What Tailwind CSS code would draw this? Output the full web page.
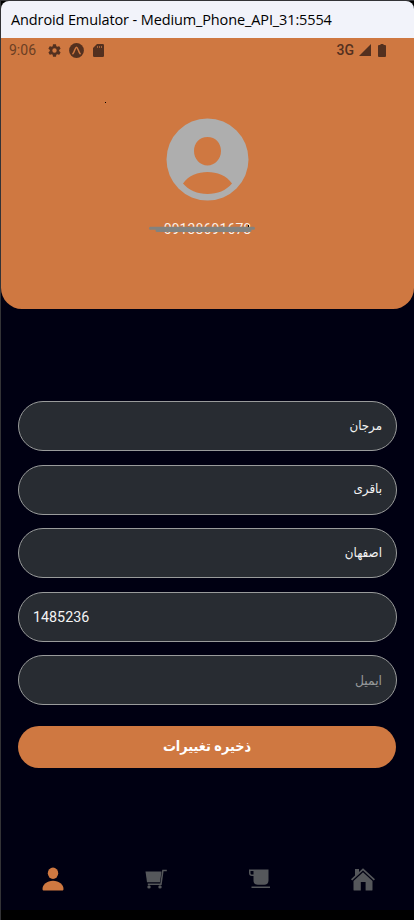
<!DOCTYPE html>
<html lang="fa">
<head>
<meta charset="utf-8">
<meta name="viewport" content="width=device-width, initial-scale=1">
<title>Profile</title>
<script src="https://cdn.jsdelivr.net/npm/@tailwindcss/browser@4"></script>
</head>
<body class="bg-black overflow-hidden">
<div class="w-[414px] h-[920px] flex flex-col border-l border-t border-[#333336] bg-black overflow-hidden font-['Roboto','DejaVu_Sans_Condensed','DejaVu_Sans',sans-serif]">
  <div class="h-[37px] shrink-0 bg-[#f2f3fa] rounded-t-[8px] flex items-center pl-[10px]">
    <span class="font-['Open_Sans',sans-serif] text-[14.5px] leading-5 tracking-[-0.12px] text-black whitespace-nowrap">Android Emulator - Medium_Phone_API_31:5554</span>
  </div>
  <main class="h-[872px] shrink-0 bg-[#000012] flex flex-col">
    <header class="h-[271px] shrink-0 bg-[#cf7841] rounded-b-[21px] flex flex-col">
      <div class="h-6 flex items-center pl-2 pr-[28px] text-[#53301f]">
        <span class="text-[14px] leading-6 w-[38px] text-[#6b3f24]">9:06</span>
        <svg class="w-[15px] h-[15px] shrink-0" viewBox="0 0 24 24" fill="currentColor"><path d="M19.43 12.98c.04-.32.07-.64.07-.98s-.03-.66-.07-.98l2.11-1.65c.19-.15.24-.42.12-.64l-2-3.46c-.12-.22-.39-.3-.61-.22l-2.49 1c-.52-.4-1.08-.73-1.69-.98l-.38-2.65A.49.49 0 0 0 14 2h-4c-.25 0-.46.18-.49.42l-.38 2.65c-.61.25-1.17.59-1.69.98l-2.49-1c-.23-.09-.49 0-.61.22l-2 3.46c-.13.22-.07.49.12.64l2.11 1.65c-.04.32-.07.65-.07.98s.03.66.07.98l-2.11 1.65c-.19.15-.24.42-.12.64l2 3.46c.12.22.39.3.61.22l2.49-1c.52.4 1.08.73 1.69.98l.38 2.65c.03.24.24.42.49.42h4c.25 0 .46-.18.49-.42l.38-2.65c.61-.25 1.17-.59 1.69-.98l2.49 1c.23.09.49 0 .61-.22l2-3.46c.12-.22.07-.49-.12-.64zM12 15.500a3.500 3.500 0 1 1 0-7 3.500 3.500 0 0 1 0 7z"/></svg>
        <svg class="w-[15px] h-[15px] shrink-0 ml-[7px]" viewBox="0 0 15 15"><circle cx="7.500" cy="7.500" r="7.400" fill="#53301f"/><path d="M3.900 10.700C5.400 9.500 6.100 4.200 7.500 4.200S9.600 9.500 11.100 10.700" fill="none" stroke="#cf7841" stroke-width="1.500" stroke-linecap="round"/></svg>
        <svg class="w-[11px] h-[13px] shrink-0 ml-[9px]" viewBox="0 0 11 13"><path d="M4 0h5.700A1.300 1.300 0 0 1 11 1.300v10.400A1.300 1.300 0 0 1 9.700 13H1.300A1.300 1.300 0 0 1 0 11.700V4z" fill="#53301f"/><path d="M4.500 2v2M6.500 2v2M8.500 2v2" stroke="#b0663a" stroke-width=".9"/></svg>
        <span class="ml-auto text-[14px] leading-6 font-medium">3G</span>
        <svg class="w-3 h-3 ml-[5px]" viewBox="0 0 12 12"><path d="M12 0v12H0z" fill="currentColor"/></svg>
        <svg class="w-2 h-[13px] ml-[7px]" viewBox="0 0 8 13"><path d="M2.500 0h3v1H7a1 1 0 0 1 1 1v10a1 1 0 0 1-1 1H1a1 1 0 0 1-1-1V2a1 1 0 0 1 1-1h1.500z" fill="currentColor"/></svg>
      </div>
      <div class="relative flex flex-col items-center pt-[56px]">
        <i class="absolute left-[104px] top-[40px] w-px h-px bg-black"></i>
        <svg class="w-[83px] h-[83px]" viewBox="0 0 83 83"><path fill="#aeaeae" fill-rule="evenodd" d="M41.500.5a41 41 0 1 1 0 82 41 41 0 0 1 0-82zm0 18.500C33.500 19 28 25 28 33S34 47.500 41.500 47.500 55 41 55 33 49.500 19 41.500 19zM17 65.500c5.500 6.500 14.500 10.500 24.500 10.500S60 72.500 66 65.500C60.500 57.500 51 54 41.500 54S22.500 57.500 17 65.500z"/></svg>
        <div class="relative mt-[18px] h-5">
          <span class="block text-[14px] leading-5 text-[#faefe7] tracking-[0.1px]">09138691678</span>
          <svg class="absolute left-[-15px] top-[6px] w-[107px] h-2" viewBox="0 0 107 8"><path d="M1.500 3.300H104.500M8 5.500H101" stroke="#82827f" stroke-width="3" stroke-linecap="round"/><path d="M99.500 0v2" stroke="#000"/></svg>
        </div>
      </div>
    </header>
    <section class="pt-[92.400px] px-[17px] flex flex-col">
      <div class="flex flex-col gap-[13.500px] text-[13.200px] text-[#f4f4f4]">
        <div dir="rtl" class="h-[50px] rounded-full border border-[#999b9b] bg-[#282c32] flex items-center px-[14px] pb-px">مرجان</div>
        <div dir="rtl" class="h-[50px] rounded-full border border-[#999b9b] bg-[#282c32] flex items-center px-[14px] pb-px">باقری</div>
        <div dir="rtl" class="h-[50px] rounded-full border border-[#999b9b] bg-[#282c32] flex items-center px-[14px] pb-px">اصفهان</div>
        <div class="h-[50px] rounded-full border border-[#999b9b] bg-[#282c32] flex items-center px-[14px] pt-px text-[14.300px]">1485236</div>
        <div dir="rtl" class="h-[50px] rounded-full border border-[#999b9b] bg-[#282c32] flex items-center px-[14px] pb-px text-[13.700px] text-[#969899]">ایمیل</div>
      </div>
      <button dir="rtl" class="mt-[20.600px] h-[42px] mr-px rounded-full bg-[#cf7841] text-white text-[14.300px] font-bold pb-px">ذخیره تغییرات</button>
    </section>
    <nav class="mt-auto h-[62px] pb-px grid grid-cols-4 items-center justify-items-center text-[#55575b]">
      <svg class="w-[22px] h-6" viewBox="0 0 22 24" fill="#cf7841"><ellipse cx="11" cy="6.300" rx="5.200" ry="5.700"/><path d="M.5 22C.5 17.500 5 13.800 11 13.800s10.500 3.700 10.500 8.200c0 1-.6 1.500-1.500 1.500H2C1 23.500.5 23 .5 22z"/></svg>
      <svg class="w-[22px] h-6" viewBox="0 0 22 24" fill="currentColor"><path d="M.5 4.500h16L15 15.300H2z"/><path d="M21.800 3.400h-3.900L16 17.200H2.800" fill="none" stroke="currentColor" stroke-width="1.500"/><circle cx="4" cy="19.900" r="1.700"/><circle cx="15" cy="19.900" r="1.700"/></svg>
      <svg class="w-[22px] h-6 ml-px" viewBox="0 0 22 24" fill="currentColor"><path fill-rule="evenodd" d="M0 2.500h19.500v11c0 2.800-1.700 4.300-4.300 4.300H8.800C6 17.800 4.500 16.300 4.500 13.500V9H3C1 9 0 8 0 6zM1.500 4v2c0 1 .5 1.500 1.500 1.500h1.500V4z"/><path d="M2.500 19.500H21V21H2.500z"/></svg>
      <svg class="w-6 h-6 ml-px" viewBox="0 0 24 24" fill="currentColor"><path d="M0 12.200 4 8.600V2h4v3l4-3.700 12 10.900-1.200 1.200L12 3.500 1.200 13.400z"/><path d="M12 5.200 21.500 14v8.700c0 .6-.3.900-.9.900h-6V15H9.800v8.600H3.400c-.6 0-.9-.3-.9-.9V14z"/></svg>
    </nav>
  </main>
</div>
</body>
</html>
